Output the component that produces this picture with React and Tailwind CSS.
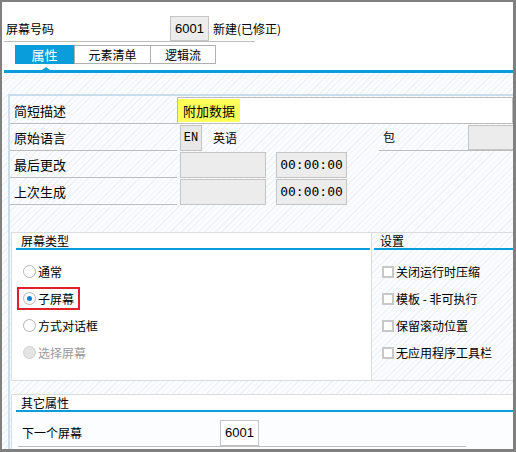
import React from "react"

const hatch =
  "bg-[repeating-linear-gradient(135deg,#fbfcfd_0px,#fbfcfd_3px,#eef2f6_3px,#eef2f6_4px)]"
const font = "font-['Noto_Sans_CJK_SC','Noto_Sans',sans-serif]"

function Radio({ label, checked, disabled, boxed }) {
  return (
    <div className="h-[27px] flex items-center pl-[5px]">
      <div
        className={`h-[23px] flex items-center border-2 pl-[4px] pr-[4px] ${
          boxed ? "border-[#e0202a]" : "border-transparent"
        }`}
      >
        <span
          className={`w-[13px] h-[13px] rounded-full border-[1.5px] flex items-center justify-center ${
            disabled ? "border-[#cfcfcf] bg-[#e4e4e4]" : "border-[#b4b4b4] bg-white"
          }`}
        >
          {checked && <span className="w-[5px] h-[5px] rounded-full bg-[#0a7fd0]" />}
        </span>
        <span className={`ml-[2px] text-[12px] leading-none ${disabled ? "text-[#9a9a9a]" : "text-black"}`}>
          {label}
        </span>
      </div>
    </div>
  )
}

function Check({ label }) {
  return (
    <div className="h-[27px] flex items-center pl-[10px]">
      <span className="w-[12px] h-[12px] border-2 border-[#c8c8c8] bg-white" />
      <span className="ml-[2px] text-[12px] leading-none text-black">{label}</span>
    </div>
  )
}

function LabelCell({ children }) {
  return (
    <div className="w-[167px] shrink-0 h-full flex items-center pl-[4px] border-b border-[#bdbdbd] text-[13px] leading-none">
      {children}
    </div>
  )
}

export default function App() {
  return (
    <div
      className={`w-[516px] h-[452px] overflow-hidden bg-white border-t-2 border-l-2 border-r-[3px] border-b-[3px] border-[#808080] flex flex-col text-black ${font}`}
    >
      {/* header */}
      <div className="bg-white">
        <div className="ml-[2px] w-[251px] pt-[14px] flex items-center border-b border-[#bdbdbd] whitespace-nowrap">
          <span className="w-[166px] shrink-0 pl-[2px] text-[12px] leading-none">屏幕号码</span>
          <span className="w-[39px] shrink-0 h-[25px] flex items-center justify-center bg-[#ececec] border border-[#c4c4c4] text-[13px] font-['Liberation_Sans',sans-serif]">
            6001
          </span>
          <span className="ml-[4px] shrink-0 text-[12px] leading-none">新建(已修正)</span>
        </div>
        <div className="ml-[13px] mt-[3px] flex h-[19px]">
          <div className="w-[59px] bg-[#0a9ddb] text-white text-[13px] leading-none flex items-center justify-center">
            属性
          </div>
          <div className="w-[77px] border border-[#b0b0b0] bg-white text-[12px] leading-none flex items-center justify-center">
            元素清单
          </div>
          <div className="w-[65px] border border-l-0 border-[#b0b0b0] bg-white text-[12px] leading-none flex items-center justify-center">
            逻辑流
          </div>
        </div>
        <div className="relative ml-[2px] mt-[6px] h-[3px] bg-[#0a9ddb]">
          <span className="absolute left-[38px] -top-[3px] w-0 h-0 border-l-[4px] border-r-[4px] border-b-[3px] border-l-transparent border-r-transparent border-b-[#0a9ddb]" />
        </div>
      </div>

      {/* content */}
      <div className={`flex-1 pl-[6px] pt-[21px] ${hatch}`}>
        <div className="h-full border-l-2 border-t-2 border-[#cbdcea] flex flex-col">
          {/* attributes */}
          <div className="h-[27px] flex items-center mt-[1px]">
            <LabelCell>简短描述</LabelCell>
            <div className="flex-1 h-full bg-white border border-[#bdbdbd] flex items-center">
              <span className="h-[23px] px-[5px] bg-[#ffff5a] flex items-center text-[13px] leading-none">
                附加数据
              </span>
            </div>
          </div>
          <div className="h-[27px] flex items-center">
            <LabelCell>原始语言</LabelCell>
            <span className="ml-[3px] w-[22px] h-[26px] bg-[#e8e8e8] border border-[#c4c4c4] flex items-center justify-center text-[12px] font-['Liberation_Mono',monospace]">
              EN
            </span>
            <span className="ml-[11px] text-[12px] leading-none">英语</span>
            <div className="ml-auto w-[134px] h-full flex items-center border-b border-[#bdbdbd]">
              <span className="pl-[4px] w-[89px] text-[12px] leading-none">包</span>
              <span className="flex-1 h-[25px] bg-[#ececec] border border-[#c4c4c4] border-r-0" />
            </div>
          </div>
          {["最后更改", "上次生成"].map((l) => (
            <div key={l} className="h-[27px] flex items-center">
              <LabelCell>{l}</LabelCell>
              <span className="ml-[3px] w-[86px] h-[26px] bg-[#ececec] border border-[#c4c4c4]" />
              <span className="ml-[10px] w-[71px] h-[26px] bg-[#ececec] border border-[#c4c4c4] flex items-center justify-center text-[13px] font-['DejaVu_Sans_Mono',monospace]">
                00:00:00
              </span>
            </div>
          ))}

          {/* screen type / settings */}
          <div className="mt-[27px] h-[149px] flex">
            <div className="w-[361px] ml-[1px] bg-white border border-[#dcdcdc]">
              <div className="ml-[4px] mr-[1px] h-[17px] border-b-2 border-[#0a9ddb] flex items-center pl-[5px] text-[12px] leading-none">
                屏幕类型
              </div>
              <div className="mt-[8px]">
                <Radio label="通常" />
                <Radio label="子屏幕" checked boxed />
                <Radio label="方式对话框" />
                <Radio label="选择屏幕" disabled />
              </div>
            </div>
            <div className="flex-1 border border-l-0 border-[#dcdcdc] border-r-0">
              <div className="ml-[2px] h-[17px] border-b-2 border-[#0a9ddb] flex items-center pl-[6px] text-[12px] leading-none">
                设置
              </div>
              <div className="mt-[8px]">
                <Check label="关闭运行时压缩" />
                <Check label="模板 - 非可执行" />
                <Check label="保留滚动位置" />
                <Check label="无应用程序工具栏" />
              </div>
            </div>
          </div>

          {/* other attributes */}
          <div className="mt-[13px] flex-1 ml-[1px] border-t border-l border-[#dcdcdc] flex flex-col">
            <div className="bg-white">
              <div className="ml-[4px] h-[17px] border-b-2 border-[#0a9ddb] flex items-center pl-[5px] text-[12px] leading-none">
                其它属性
              </div>
            </div>
            <div className="flex-1 bg-[#fcfdfe] pt-[8px]">
              <div className="ml-[6px] w-[448px] h-[27px] flex items-center border-b border-[#bdbdbd]">
                <span className="w-[202px] shrink-0 pl-[4px] text-[12px] leading-none">下一个屏幕</span>
                <span className="w-[39px] h-[26px] bg-white border border-[#c4c4c4] flex items-center justify-center text-[13px] font-['Liberation_Sans',sans-serif]">
                  6001
                </span>
              </div>
            </div>
          </div>
        </div>
      </div>
    </div>
  )
}
